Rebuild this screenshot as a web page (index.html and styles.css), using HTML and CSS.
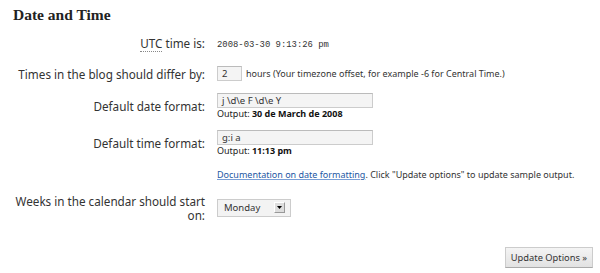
FILE: index.html
```html
<!DOCTYPE html>
<html>
<head>
<meta charset="utf-8">
<link rel="stylesheet" href="styles.css">
</head>
<body>
<div class="wrap">
  <h2 class="title">Date and Time</h2>
  <div class="form">
    <div class="label row-utc"><abbr class="abbr" title="Coordinated Universal Time">UTC</abbr> time is:</div>
    <div class="field row-utc"><span class="mono">2008-03-30 9:13:26 pm</span></div>

    <div class="label">Times in the blog should differ by:</div>
    <div class="field row-offset"><span class="input small-input">2</span><span class="note">hours (Your timezone offset, for example -6 for Central Time.)</span></div>

    <div class="label">Default date format:</div>
    <div class="field col"><span class="input wide-input">j \d\e F \d\e Y</span><span class="output">Output: <b>30 de March de 2008</b></span></div>

    <div class="label">Default time format:</div>
    <div class="field col"><span class="input wide-input">g:i a</span><span class="output">Output: <b>11:13 pm</b></span></div>

    <div class="label"></div>
    <div class="field row-doc"><span class="note"><a class="doc" href="#">Documentation on date formatting</a>. Click "Update options" to update sample output.</span></div>

    <div class="label two-line">Weeks in the calendar should start on:</div>
    <div class="field"><span class="select"><span class="select-text">Monday</span><span class="arrow"><svg width="5" height="3" viewBox="0 0 5 3"><path d="M0 0H5L2.5 3Z" fill="#000"/></svg></span></span></div>
  </div>
  <div class="actions"><span class="button">Update Options »</span></div>
</div>
</body>
</html>
```
FILE: styles.css
```css
body { margin: 0; background: #fff; font-family: "Noto Sans", sans-serif; color: #333; }
.wrap { padding: 0 7px 0 13px; }
.title { font-family: "Liberation Serif", serif; font-size: 15.5px; line-height: 16px; font-weight: bold; margin: 0; padding-top: 7px; color: #222; }
.form { display: grid; grid-template-columns: 192px 1fr; column-gap: 12px; row-gap: 11px; margin-top: 12.5px; align-items: center; }
.label { text-align: right; font-size: 11.7px; line-height: 14px; color: #333; }
.abbr { text-decoration: none; border-bottom: 1px dotted #888; }
.field { display: flex; align-items: center; }
.row-utc { height: 19px; }
.row-offset { height: 16px; }
.row-doc { height: 16px; }
.mono { font-family: "Liberation Mono", monospace; font-size: 8.9px; color: #333; }
.input { display: flex; align-items: center; box-sizing: border-box; border: 1px solid #ccc; border-top-color: #bbb; background: #f4f4f4; height: 15px; font-size: 9.5px; padding: 0 4px; color: #333; }
.small-input { width: 25px; margin-right: 4px; }
.wide-input { width: 156px; }
.col { flex-direction: column; align-items: flex-start; }
.output { font-size: 9px; line-height: 11px; color: #222; }
.output b { color: #111; }
.note { font-size: 9px; color: #333; }
.doc { color: #2358a3; text-decoration-color: #7a9fd6; }
.select { display: inline-flex; width: 74px; height: 18px; border: 1px solid #ccc; box-sizing: border-box; background: #f3f3f3; align-items: center; justify-content: space-between; padding: 0 5px 0 6px; font-size: 9.5px; color: #333; }
.arrow { display: flex; align-items: center; justify-content: center; width: 9px; height: 9px; border: 1px solid #999; border-top-color: #fff; border-left-color: #fff; background: #ddd; }
.actions { display: flex; justify-content: flex-end; margin-top: 25px; }
.button { box-sizing: border-box; height: 21px; display: flex; align-items: center; border: 1px solid #ccc; border-bottom-color: #aaa; background: linear-gradient(#f4f4f4, #e2e2e2); font-size: 9.3px; padding: 0 5px; color: #333; }
```
